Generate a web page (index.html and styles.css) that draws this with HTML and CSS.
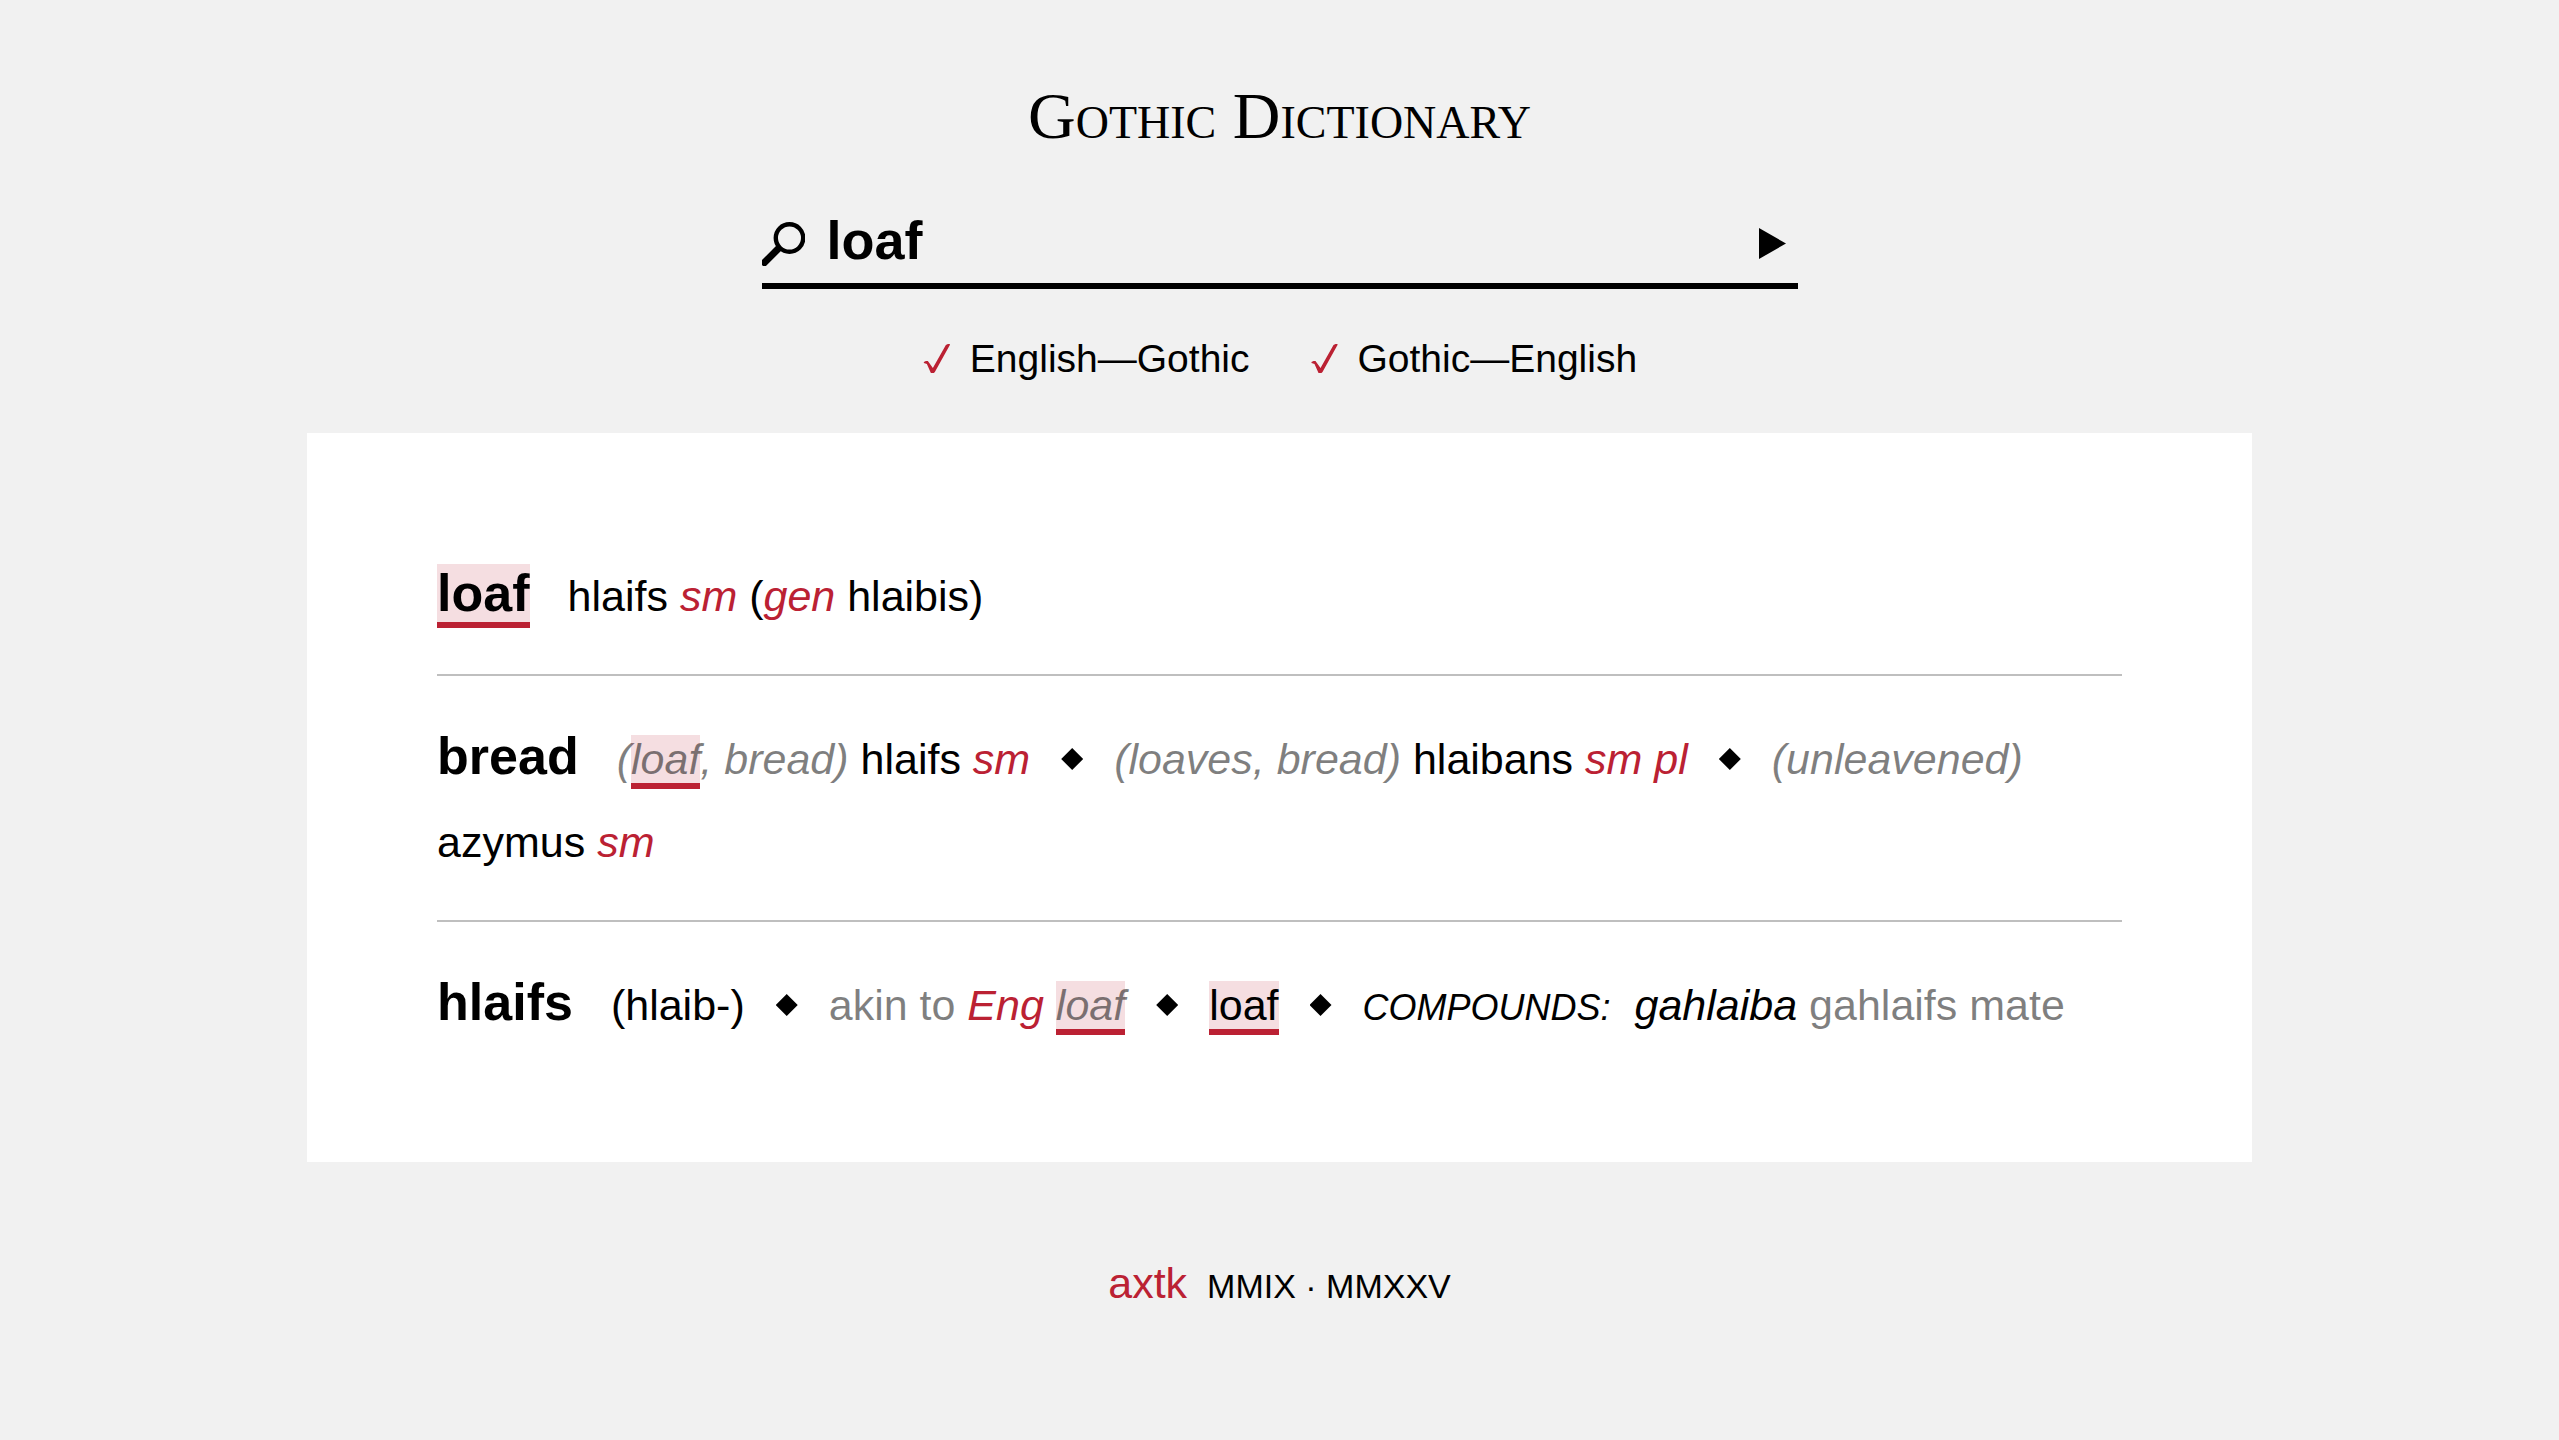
FILE: index.html
```html
<!DOCTYPE html>
<html lang="en">
<head>
    <meta charset="UTF-8">
    <meta name="viewport" content="width=device-width, initial-scale=1.0">
    <title>Gothic Dictionary</title>
    <link rel="stylesheet" href="styles.css">
</head>
<body>
    <header>
        <h1>Gothic Dictionary</h1>
        <form class="search">
            <div class="search-bar">
                <label for="query" aria-label="Search">
                    <svg class="search-icon" viewBox="0 0 43 44">
                        <circle cx="27.5" cy="16" r="13.7" fill="none" stroke="#000" stroke-width="4.4"/>
                        <path d="M18 25 L0 43" stroke="#000" stroke-width="7"/>
                    </svg>
                </label>
                <input type="text" id="query" class="query" name="query" value="loaf" autocomplete="off">
                <button type="submit" class="go" aria-label="Go">
                    <svg class="go-icon" viewBox="0 0 27 31"><path d="M0 0 L27 15.5 L0 31 Z"/></svg>
                </button>
            </div>
            <div class="options">
                <label class="option"><input type="checkbox" name="eg" checked>English—Gothic</label>
                <label class="option"><input type="checkbox" name="ge" checked>Gothic—English</label>
            </div>
        </form>
    </header>
    <main class="results">
        <p class="entry"><b class="word"><mark>loaf</mark></b>hlaifs <i class="gram">sm</i> (<i class="gram">gen</i> hlaibis)</p>
        <p class="entry"><b class="word">bread</b><i class="note">(<mark>loaf</mark>, bread)</i> hlaifs <i class="gram">sm</i><span class="sep"></span><i class="note">(loaves, bread)</i> hlaibans <i class="gram">sm pl</i><span class="sep"></span><i class="note">(unleavened)</i> azymus <i class="gram">sm</i></p>
        <p class="entry"><b class="word">hlaifs</b>(hlaib-)<span class="sep"></span><span class="note">akin to <i class="gram">Eng</i> <i><mark>loaf</mark></i></span><span class="sep"></span><mark>loaf</mark><span class="sep"></span><i class="caps">compounds:</i><i>gahlaiba</i> <span class="note">gahlaifs mate</span></p>
    </main>
    <footer>
        <a href="#">axtk</a>
        <span class="years">MMIX · MMXXV</span>
    </footer>
</body>
</html>
```

FILE: styles.css
```css
* {
    box-sizing: border-box;
}
body {
    margin: 0;
    min-height: 100vh;
    background-color: #f1f1f1;
    color: #000;
    font-family: "Liberation Sans", Arial, sans-serif;
    font-size: 43px;
}
header {
    display: flex;
    flex-direction: column;
    align-items: center;
    padding-top: 80px;
}
h1 {
    margin: 0;
    font-family: "Liberation Serif", "Times New Roman", serif;
    font-size: 66px;
    font-weight: normal;
    font-variant: small-caps;
    line-height: 72px;
}
.search {
    width: 90%;
    max-width: 1036px;
    margin-top: 58px;
}
.search-bar {
    display: flex;
    align-items: center;
    height: 79px;
    padding-right: 12px;
    padding-bottom: 6px;
    border-bottom: 6px solid #000;
}
.search-icon {
    display: block;
    width: 43px;
    height: 44px;
}
.query {
    flex: 1;
    min-width: 0;
    margin: 0 22px;
    padding: 0 0 8px;
    border: none;
    outline: none;
    background: none;
    color: #000;
    font: bold 54px "Liberation Sans", Arial, sans-serif;
}
.go {
    padding: 0;
    border: none;
    background: none;
    cursor: pointer;
}
.go-icon {
    display: block;
    width: 27px;
    height: 31px;
}
.options {
    display: flex;
    justify-content: center;
    gap: 60px;
    margin-top: 48px;
    font-size: 39px;
    line-height: 44px;
}
.option {
    display: flex;
    align-items: center;
    gap: 20px;
    cursor: pointer;
}
.option input {
    appearance: none;
    width: 28px;
    height: 30px;
    margin: 0;
}
/* tick */
.option input:checked {
    background-color: #bb2133;
    clip-path: polygon(2px 18px, 4px 17px, 6px 17px, 11px 24px, 24px 1px, 26px 0, 28px 0, 28px 1px, 13px 28px, 12px 29px, 9px 29px, 5px 20px, 2px 19px);
}
.results {
    width: 76%;
    margin: 52px auto 0;
    padding: 80px 130px 79px;
    background-color: #fff;
}
.entry {
    margin: 0;
    padding: 42px 0 36px;
    line-height: 83px;
}
.entry + .entry {
    border-top: 2px solid rgba(0, 0, 0, 0.25);
}
.word {
    margin-right: 38px;
    font-size: 52px;
    line-height: 54px;
}
mark {
    border-bottom: 6px solid #bb2133;
    background-color: rgba(187, 33, 51, 0.15);
    color: inherit;
}
.gram {
    color: #bb2133;
}
.note {
    color: rgba(0, 0, 0, 0.5);
}
.sep {
    display: inline-block;
    width: 22px;
    height: 22px;
    margin: 0 31px;
    background-color: #000;
    clip-path: polygon(50% 0, 100% 50%, 50% 100%, 0 50%);
    vertical-align: 4px;
}
.caps {
    margin-right: 24px;
    font-size: 36px;
    line-height: 54px;
    text-transform: uppercase;
}
footer {
    display: flex;
    justify-content: center;
    align-items: baseline;
    gap: 20px;
    padding: 97px 0 60px;
}
footer a {
    color: #bb2133;
    text-decoration: none;
}
.years {
    font-size: 34px;
}
```
